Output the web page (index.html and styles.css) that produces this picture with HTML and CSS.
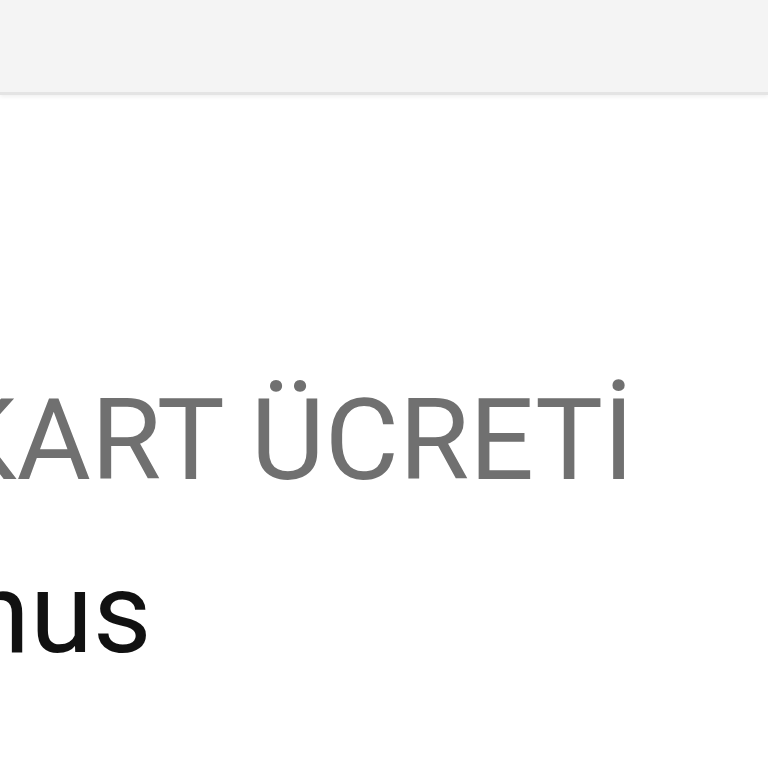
FILE: index.html
```html
<!DOCTYPE html>
<html lang="tr">
<head>
<meta charset="utf-8">
<link rel="stylesheet" href="styles.css">
</head>
<body>
<div class="page">
  <header class="topbar"></header>
  <main class="content">
    <div class="label">KART ÜCRETİ</div>
    <div class="value">Bonus</div>
  </main>
</div>
</body>
</html>
```
FILE: styles.css
```css
html, body {
  margin: 0;
  padding: 0;
  background: #ffffff;
}
.page {
  width: 768px;
  height: 768px;
  overflow: hidden;
  font-family: Roboto, "Noto Sans", sans-serif;
}
.topbar {
  height: 92px;
  background: #f4f4f4;
  border-bottom: 3px solid #e4e4e4;
  box-shadow: 0 2px 4px rgba(0, 0, 0, 0.06);
}
.content {
  display: flex;
  flex-direction: column;
}
.label {
  margin-top: 288px;
  margin-left: -55px;
  font-size: 114px;
  line-height: 1;
  color: #707070;
  white-space: nowrap;
}
.value {
  margin-top: 59px;
  margin-left: -169px;
  font-size: 114px;
  line-height: 1;
  color: #111111;
  white-space: nowrap;
}
```
